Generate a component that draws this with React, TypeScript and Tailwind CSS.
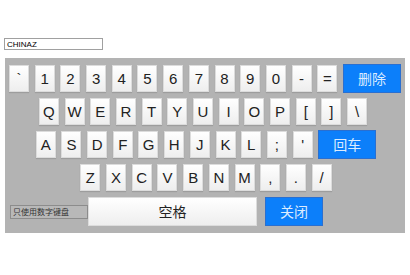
import React from "react";

const row1 = ["`", "1", "2", "3", "4", "5", "6", "7", "8", "9", "0", "-", "="];
const row2 = ["Q", "W", "E", "R", "T", "Y", "U", "I", "O", "P", "[", "]", "\\"];
const row3 = ["A", "S", "D", "F", "G", "H", "J", "K", "L", ";", "'"];
const row4 = ["Z", "X", "C", "V", "B", "N", "M", ",", ".", "/"];

const keyCls =
  "flex h-[27px] w-[20px] items-center justify-center border border-[#dcdcdc] bg-gradient-to-b from-white to-[#eeeeee] text-[15px] leading-none text-[#222] shadow-[0_1px_1px_rgba(0,0,0,0.12)]";
const blueCls =
  "flex h-[29px] w-[58px] items-center justify-center border border-[#2a6fd0] bg-[#0c7ffa] text-[14px] leading-none text-[#dcecff]";

const Key = ({ label }: { label: string }) => <div className={keyCls}>{label}</div>;

const App: React.FC = () => {
  return (
    <div className="h-[275px] w-[410px] bg-white font-['Liberation_Sans','Noto_Sans_CJK_SC',sans-serif]">
      <div className="h-[58px] px-[4px] pt-[38px]">
        <input
          defaultValue="CHINAZ"
          className="block h-[12px] w-[99px] border border-[#a0a0a0] bg-white px-[2px] text-[8px] leading-[10px] text-black outline-none"
        />
      </div>
      <div className="mx-[5px] flex h-[175px] flex-col gap-[6px] bg-[#b3b3b3] px-[4px] pt-[7px]">
        <div className="flex h-[27px] items-center justify-center gap-[5.7px]">
          {row1.map((k) => (
            <Key key={k} label={k} />
          ))}
          <div className={blueCls}>删除</div>
        </div>
        <div className="flex h-[27px] items-center justify-center gap-[5.7px] pr-[4px]">
          {row2.map((k) => (
            <Key key={k} label={k} />
          ))}
        </div>
        <div className="flex h-[27px] items-center justify-center gap-[5.7px] pl-[2px]">
          {row3.map((k) => (
            <Key key={k} label={k} />
          ))}
          <div className={blueCls}>回车</div>
        </div>
        <div className="flex h-[27px] items-center justify-center gap-[5.7px] pl-[2px]">
          {row4.map((k) => (
            <Key key={k} label={k} />
          ))}
        </div>
        <div className="flex h-[29px] items-center pl-[1px]">
          <input
            defaultValue="只使用数字键盘"
            className="block h-[14px] w-[78px] border border-[#8c8c8c] bg-[#b8b8b8] px-[2px] text-[8px] leading-[12px] text-[#333] outline-none"
          />
          <div className="flex h-[29px] w-[169px] items-center justify-center border border-[#dcdcdc] bg-gradient-to-b from-white to-[#eeeeee] text-[14px] leading-none text-[#222]">
            空格
          </div>
          <div className={blueCls + " ml-[8px]"}>关闭</div>
        </div>
      </div>
    </div>
  );
};

export default App;
